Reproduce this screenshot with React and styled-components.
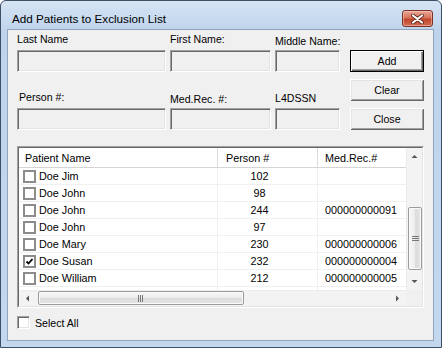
import React from 'react';
import styled, { createGlobalStyle } from 'styled-components';

const GlobalStyle = createGlobalStyle`
  html, body {
    margin: 0;
    padding: 0;
    background: #fff;
  }
  body {
    font-family: "Liberation Sans", Arial, sans-serif;
    color: #000;
  }
`;

const Window = styled.div`
  box-sizing: border-box;
  width: 442px;
  height: 348px;
  display: flex;
  flex-direction: column;
  border: 1px solid #3d4f66;
  border-radius: 6px 6px 0 0;
  background: linear-gradient(to bottom, #d6e4f4 0px, #bfd4ec 29px, #c3d8ee 100%);
  padding: 0 7px 6px 6px;
`;

const TitleBar = styled.div`
  height: 28px;
  display: flex;
  align-items: flex-start;
  justify-content: space-between;
  padding-left: 5px;
`;

const Title = styled.div`
  padding-top: 10px;
  font-size: 11.7px;
  line-height: 16px;
  color: #000;
`;

const CloseButton = styled.div`
  box-sizing: border-box;
  width: 31px;
  height: 17px;
  margin-top: 9px;
  margin-right: 1px;
  border: 1px solid #7a3325;
  border-radius: 3px;
  background: linear-gradient(to bottom, #eaa898 0%, #d8725b 45%, #c2452e 55%, #d26e55 100%);
  box-shadow: inset 0 0 0 1px rgba(255, 220, 210, 0.45);
  display: flex;
  align-items: center;
  justify-content: center;
`;

const Client = styled.div`
  flex: 1;
  display: flex;
  flex-direction: column;
  border: 1px solid #8fa4be;
  background: #f0f0f0;
  padding: 0 9px;
`;

const Form = styled.div`
  display: flex;
  gap: 10px;
  height: 100px;
`;

const Fields = styled.div`
  display: grid;
  grid-template-columns: 149px 101px 65px;
  grid-template-rows: 42px 58px;
  column-gap: 4px;
`;

const Field = styled.div`
  display: flex;
  flex-direction: column;
  justify-content: flex-end;
`;

const Label = styled.label`
  font-size: 10.6px;
  line-height: 13px;
  white-space: nowrap;
  margin-bottom: ${(p) => p.$gap}px;
  padding-left: ${(p) => p.$indent || 0}px;
`;

const TextBox = styled.input`
  box-sizing: border-box;
  width: 100%;
  height: 22px;
  margin: 0;
  padding: 0 3px;
  background: #f0f0f0;
  border: 1px solid;
  border-color: #a0a0a0 #fff #fff #a0a0a0;
  box-shadow: inset 1px 1px 0 #696969, inset -1px -1px 0 #e3e3e3;
  outline: none;
  font-family: inherit;
  font-size: 10.6px;
`;

const ButtonColumn = styled.div`
  display: flex;
  flex-direction: column;
  gap: 7px;
  padding-top: 20px;
`;

const Button = styled.button`
  box-sizing: border-box;
  width: 74px;
  height: 22px;
  margin: 0;
  padding: 0;
  background: #f0f0f0;
  font-family: inherit;
  font-size: 10.6px;
  color: #000;
  border: ${(p) => (p.$default ? '1px solid #000' : 'none')};
  box-shadow: ${(p) =>
    p.$default
      ? 'inset 1px 1px 0 #fff, inset -1px -1px 0 #696969, inset -2px -2px 0 #a0a0a0'
      : 'inset 1px 1px 0 #fff, inset -1px -1px 0 #696969, inset 2px 2px 0 #e3e3e3, inset -2px -2px 0 #a0a0a0'};
`;

const ListFrame = styled.div`
  box-sizing: border-box;
  margin-top: 16px;
  height: 162px;
  border: 1px solid;
  border-color: #a0a0a0 #fff #fff #a0a0a0;
`;

const ListBody = styled.div`
  height: 100%;
  box-sizing: border-box;
  border: 1px solid;
  border-color: #696969 #e3e3e3 #e3e3e3 #696969;
  display: grid;
  grid-template-columns: 387px 16px;
  grid-template-rows: 142px 16px;
  background: #fff;
`;

const Viewport = styled.div`
  overflow: hidden;
  display: flex;
  flex-direction: column;
  background: #fff;
`;

const columns = '199px 100px 120px';

const HeaderRow = styled.div`
  box-sizing: border-box;
  flex: none;
  display: grid;
  grid-template-columns: ${columns};
  height: 20px;
  border-bottom: 1px solid #d5d5d5;
`;

const HeaderCell = styled.div`
  border-right: 1px solid #dcdcdc;
  padding-left: ${(p) => p.$indent}px;
  display: flex;
  align-items: center;
  font-size: 10.8px;
  white-space: nowrap;
`;

const Row = styled.div`
  box-sizing: border-box;
  flex: none;
  display: grid;
  grid-template-columns: ${columns};
  height: 17px;
  border-bottom: 1px solid #f0f0f0;
`;

const Filler = styled.div`
  flex: 1;
  display: grid;
  grid-template-columns: ${columns};
`;

const Cell = styled.div`
  border-right: 1px solid #f0f0f0;
  display: flex;
  align-items: center;
  justify-content: ${(p) => p.$align || 'flex-start'};
  padding-left: ${(p) => p.$left || 0}px;
  padding-right: ${(p) => p.$right || 0}px;
  gap: 3px;
  font-size: 10.8px;
  white-space: nowrap;
  overflow: hidden;
`;

const RowCheck = styled.span`
  box-sizing: border-box;
  width: 13px;
  height: 13px;
  flex: none;
  border: 2px solid #8c8c8c;
  background: #fff;
  display: flex;
  align-items: center;
  justify-content: center;
`;

const VScroll = styled.div`
  display: flex;
  flex-direction: column;
  background: #f3f3f3;
  border-left: 1px solid #ececec;
`;

const HScroll = styled.div`
  display: flex;
  background: #f3f3f3;
  border-top: 1px solid #ececec;
`;

const ArrowBox = styled.div`
  flex: none;
  width: ${(p) => (p.$vertical ? '100%' : '17px')};
  height: ${(p) => (p.$vertical ? '17px' : '100%')};
  display: flex;
  align-items: center;
  justify-content: center;
`;

const Track = styled.div`
  flex: 1;
  display: flex;
  flex-direction: ${(p) => (p.$vertical ? 'column' : 'row')};
`;

const Thumb = styled.div`
  box-sizing: border-box;
  border: 1px solid #9c9c9c;
  border-radius: 2px;
  display: flex;
  align-items: center;
  justify-content: center;
  background: ${(p) =>
    p.$vertical
      ? 'linear-gradient(to right, #f7f7f7, #ececec 50%, #dcdcdc 51%, #e4e4e4)'
      : 'linear-gradient(to bottom, #f7f7f7, #ececec 50%, #dcdcdc 51%, #e4e4e4)'};
  box-shadow: inset 0 0 0 1px #fafafa;
  ${(p) =>
    p.$vertical
      ? 'width: 14px; margin-left: 1px;'
      : 'height: 14px; margin-top: 0px;'}
`;

const Corner = styled.div`
  background: #f0f0f0;
`;

const SelectAllRow = styled.div`
  display: flex;
  align-items: center;
  gap: 5px;
  margin-top: 8px;
  font-size: 10.6px;
`;

const ClassicCheck = styled.span`
  box-sizing: border-box;
  width: 13px;
  height: 13px;
  border: 1px solid;
  border-color: #a0a0a0 #fff #fff #a0a0a0;
  box-shadow: inset 1px 1px 0 #696969, inset -1px -1px 0 #e3e3e3;
  background: #fff;
`;

const Arrow = ({ dir }) => {
  const rot = { up: 0, right: 90, down: 180, left: 270 }[dir];
  return (
    <svg width="7" height="7" viewBox="0 0 7 7" style={{ transform: `rotate(${rot}deg)` }}>
      <path d="M0.5 5 L3.5 2 L6.5 5 Z" fill="#555" />
    </svg>
  );
};

const Grip = ({ vertical }) => (
  <svg width={vertical ? 7 : 6} height={vertical ? 6 : 7} viewBox={vertical ? '0 0 7 6' : '0 0 6 7'}>
    {vertical ? (
      <g stroke="#777" strokeWidth="1">
        <path d="M0 0.5 H7 M0 2.5 H7 M0 4.5 H7" />
      </g>
    ) : (
      <g stroke="#777" strokeWidth="1">
        <path d="M0.5 0 V7 M2.5 0 V7 M4.5 0 V7" />
      </g>
    )}
  </svg>
);

const patients = [
  { name: 'Doe Jim', person: '102', mrn: '' },
  { name: 'Doe John', person: '98', mrn: '' },
  { name: 'Doe John', person: '244', mrn: '000000000091' },
  { name: 'Doe John', person: '97', mrn: '' },
  { name: 'Doe Mary', person: '230', mrn: '000000000006' },
  { name: 'Doe Susan', person: '232', mrn: '000000000004', checked: true },
  { name: 'Doe William', person: '212', mrn: '000000000005' },
];

const App = () => {
  return (
    <>
      <GlobalStyle />
      <Window>
        <TitleBar>
          <Title>Add Patients to Exclusion List</Title>
          <CloseButton>
            <svg width="13" height="10" viewBox="0 0 13 10">
              <path d="M2 1.5 L11 8.5 M11 1.5 L2 8.5" stroke="#5e2418" strokeWidth="3.8" strokeLinecap="round" />
              <path d="M2 1.5 L11 8.5 M11 1.5 L2 8.5" stroke="#fff" strokeWidth="2.2" strokeLinecap="round" />
            </svg>
          </CloseButton>
        </TitleBar>
        <Client>
          <Form>
            <Fields>
              <Field>
                <Label $gap={4}>Last Name</Label>
                <TextBox readOnly />
              </Field>
              <Field>
                <Label $gap={4}>First Name:</Label>
                <TextBox readOnly />
              </Field>
              <Field>
                <Label $gap={2}>Middle Name:</Label>
                <TextBox readOnly />
              </Field>
              <Field>
                <Label $gap={4} $indent={2}>Person #:</Label>
                <TextBox readOnly />
              </Field>
              <Field>
                <Label $gap={2}>Med.Rec. #:</Label>
                <TextBox readOnly />
              </Field>
              <Field>
                <Label $gap={3}>L4DSSN</Label>
                <TextBox readOnly />
              </Field>
            </Fields>
            <ButtonColumn>
              <Button $default>Add</Button>
              <Button>Clear</Button>
              <Button>Close</Button>
            </ButtonColumn>
          </Form>
          <ListFrame>
            <ListBody>
              <Viewport>
                <HeaderRow>
                  <HeaderCell $indent={6}>Patient Name</HeaderCell>
                  <HeaderCell $indent={8}>Person #</HeaderCell>
                  <HeaderCell $indent={7}>Med.Rec.#</HeaderCell>
                </HeaderRow>
                {patients.map((p, i) => (
                  <Row key={i}>
                    <Cell $left={4}>
                      <RowCheck>
                        {p.checked && (
                          <svg width="9" height="9" viewBox="0 0 9 9">
                            <path d="M1.5 4.5 L3.5 6.5 L7.5 2" stroke="#000" strokeWidth="1.8" fill="none" />
                          </svg>
                        )}
                      </RowCheck>
                      {p.name}
                    </Cell>
                    <Cell $align="center" $right={16}>{p.person}</Cell>
                    <Cell $left={7}>{p.mrn}</Cell>
                  </Row>
                ))}
                <Filler>
                  <Cell />
                  <Cell />
                  <Cell />
                </Filler>
              </Viewport>
              <VScroll>
                <ArrowBox $vertical>
                  <Arrow dir="up" />
                </ArrowBox>
                <Track $vertical>
                  <Thumb $vertical style={{ marginTop: 42, height: 63 }}>
                    <Grip vertical />
                  </Thumb>
                </Track>
                <ArrowBox $vertical>
                  <Arrow dir="down" />
                </ArrowBox>
              </VScroll>
              <HScroll>
                <ArrowBox>
                  <Arrow dir="left" />
                </ArrowBox>
                <Track>
                  <Thumb style={{ marginLeft: 2, width: 206 }}>
                    <Grip />
                  </Thumb>
                </Track>
                <ArrowBox>
                  <Arrow dir="right" />
                </ArrowBox>
              </HScroll>
              <Corner />
            </ListBody>
          </ListFrame>
          <SelectAllRow>
            <ClassicCheck />
            Select All
          </SelectAllRow>
        </Client>
      </Window>
    </>
  );
};

export default App;
